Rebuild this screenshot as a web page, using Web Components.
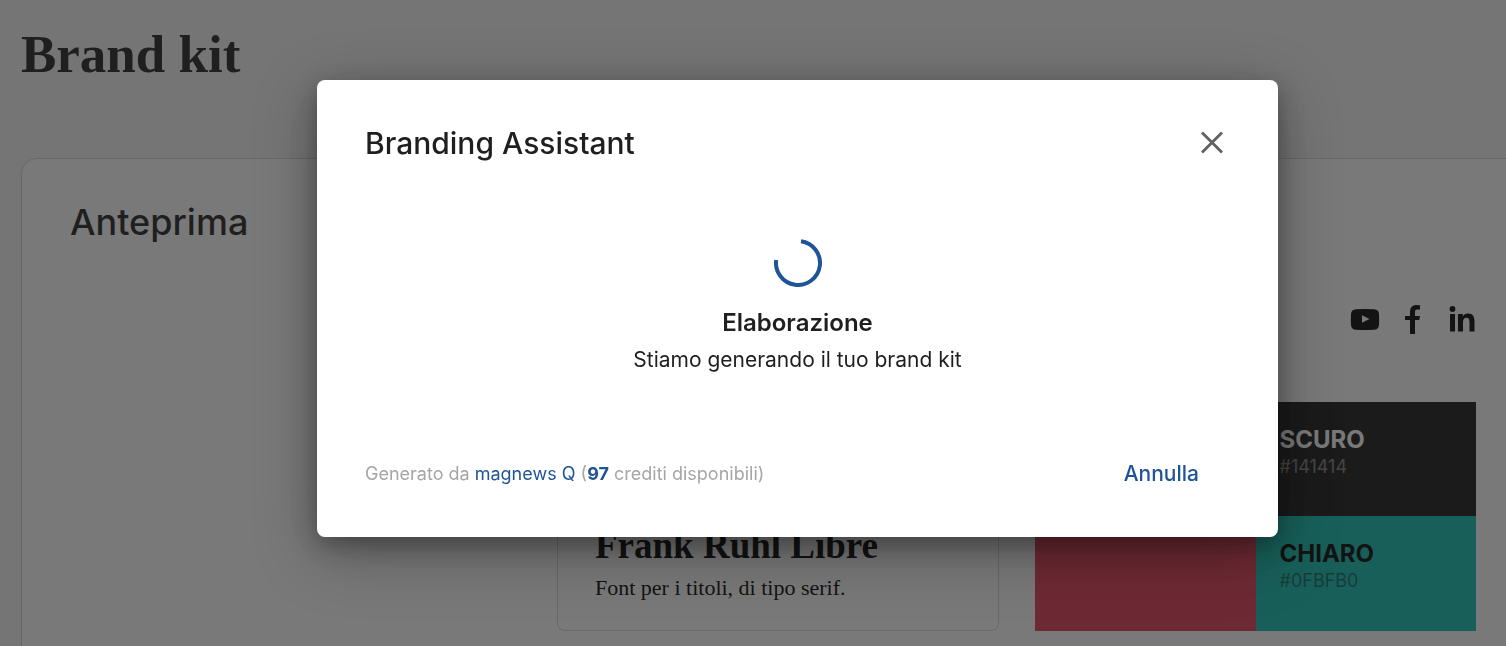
<!DOCTYPE html>
<html lang="it">
<head>
<meta charset="utf-8">
<meta name="viewport" content="width=device-width, initial-scale=1">
<title>Brand kit</title>
<style>
  html, body { margin: 0; height: 100%; overflow: hidden; }
  body {
    background: #f5f5f5;
    color: #1f1f1f;
    font-family: Inter, sans-serif;
  }
</style>
</head>
<body>
<brand-page>
  <preview-card heading="Anteprima">
    <social-links slot="social"></social-links>
    <font-card name="Frank Ruhl Libre">Font per i titoli, di tipo serif.</font-card>
    <color-palette>
      <color-swatch style="--fill:#e23a53"></color-swatch>
      <color-swatch name="SCURO" code="#141414" style="--fill:#141414;--ink:#fff"></color-swatch>
      <color-swatch style="--fill:#e23a53"></color-swatch>
      <color-swatch name="CHIARO" code="#0FBFB0" style="--fill:#0fbfb0;--ink:#000"></color-swatch>
    </color-palette>
  </preview-card>
</brand-page>
<modal-dialog heading="Branding Assistant">
  <progress-status heading="Elaborazione">Stiamo generando il tuo brand kit</progress-status>
  <credits-note slot="note" credits="97"></credits-note>
</modal-dialog>

<script>
const define = (tag, render) => customElements.define(tag, class extends HTMLElement {
  connectedCallback() {
    if (this.shadowRoot) return;
    this.attachShadow({ mode: 'open' }).innerHTML = render(this);
  }
});

define('brand-page', () => `
  <style>
    :host { display: block; padding: 26px 0 0 21px; }
    h1 { margin: 0 0 76px; font: bold 53px/56px "Liberation Serif", serif; }
  </style>
  <h1>Brand kit</h1>
  <slot></slot>`);

define('preview-card', el => `
  <style>
    :host {
      display: block; padding: 39px 30px 48px 48px; background: #fff;
      border: 1px solid #d5d5d5; border-right: 0; border-radius: 16px 0 0 16px;
    }
    h2 { margin: 0; font-size: 36px; line-height: 48px; font-weight: 500; }
    .social { display: flex; justify-content: flex-end; margin: 58px 0 66px; }
    .columns { display: grid; grid-template-columns: 451fr 442fr 441fr; gap: 36px; }
    ::slotted(font-card) { grid-column: 2; }
  </style>
  <h2>${el.getAttribute('heading')}</h2>
  <div class="social"><slot name="social"></slot></div>
  <div class="columns"><slot></slot></div>`);

define('social-links', () => `
  <style>
    :host { display: flex; gap: 16px; }
    a { display: block; width: 32px; height: 32px; color: #000; }
    svg { display: block; fill: currentColor; }
  </style>
  <a href="#youtube" aria-label="YouTube"><svg width="32" height="32" viewBox="0 0 32 32"><path fill-rule="evenodd" d="M8 5.200Q17 4.600 26 5.200Q30.600 5.500 31 10Q31.300 15.500 31 21Q30.600 25.500 26 25.800Q17 26.400 8 25.800Q3.400 25.500 3 21Q2.700 15.500 3 10Q3.400 5.500 8 5.200ZM14 11.200V18.800L21.500 15Z"/></svg></a>
  <a href="#facebook" aria-label="Facebook"><svg width="32" height="32" viewBox="0 0 32 32"><path d="M24 1.300V5.600H21.200C19.400 5.600 19 6.500 19 8V12H24L23.300 16H19V30H14V16H9V12H14V8C14 3.500 16.500 1 20.700 1Q22.700 1 24 1.300Z"/></svg></a>
  <a href="#linkedin" aria-label="LinkedIn"><svg width="32" height="32" viewBox="0 0 32 32"><circle cx="8.500" cy="5" r="2.900"/><path d="M6 10H11V27.500H6ZM14 10H18.800V12.300C19.800 10.700 21.500 9.500 24 9.500C29.200 9.500 30.500 12.800 30.500 17.700V27.500H25.500V18.700C25.500 15.900 25 13.700 22.600 13.700C20 13.700 19 15.600 19 18.300V27.500H14Z"/></svg></a>`);

define('font-card', el => `
  <style>
    :host {
      display: flex; flex-direction: column; justify-content: flex-end;
      padding: 0 37px 28px; border: 1px solid #d5d5d5; border-radius: 8px;
      font-family: "Liberation Serif", serif; color: #000;
    }
    h3 { margin: 0 0 6px; font-size: 37px; line-height: 44px; }
    p { margin: 0; font-size: 22px; line-height: 28px; }
  </style>
  <h3>${el.getAttribute('name')}</h3>
  <p><slot></slot></p>`);

define('color-palette', () => `
  <style>:host { display: grid; grid-template: 114px 115px / 1fr 1fr; }</style>
  <slot></slot>`);

define('color-swatch', el => `
  <style>
    :host {
      display: block; box-sizing: border-box; padding: 23px 24px;
      background: var(--fill); color: var(--ink);
    }
    strong, span { display: block; }
    strong { font-size: 24px; line-height: 30px; }
    span { font-size: 18px; line-height: 24px; opacity: .45; }
  </style>
  ${el.hasAttribute('name') ? `<strong>${el.getAttribute('name')}</strong><span>${el.getAttribute('code')}</span>` : ''}`);

define('modal-dialog', el => `
  <style>
    :host {
      position: fixed; inset: 0; display: flex; align-items: flex-start; justify-content: center;
      padding: 80px 0 48px 89px; background: rgba(31, 31, 31, .6);
    }
    section {
      box-sizing: border-box; width: 100%; max-width: 961px; padding: 48px;
      background: #fff; border-radius: 8px;
      box-shadow: 0 8px 24px rgba(0, 0, 0, .3), 0 16px 64px rgba(0, 0, 0, .3);
    }
    header, footer { display: flex; align-items: center; justify-content: space-between; height: 30px; }
    h2 { margin: 0; font-size: 30px; line-height: 30px; font-weight: 500; }
    button { border: 0; background: none; font: 500 21px/30px Inter, sans-serif; color: #1f5499; }
    .close { padding: 6px; color: #616161; }
    .close svg { display: block; }
    .cancel { padding: 0 31px; }
  </style>
  <section role="dialog" aria-modal="true" aria-labelledby="title">
    <header>
      <h2 id="title">${el.getAttribute('heading')}</h2>
      <button class="close" type="button" aria-label="Chiudi"><svg width="24" height="24" viewBox="0 0 24 24" fill="none" stroke="currentColor" stroke-width="2.800"><path d="M2 1.500L22 21.500M22 1.500L2 21.500"/></svg></button>
    </header>
    <slot></slot>
    <footer>
      <slot name="note"></slot>
      <button class="cancel" type="button">Annulla</button>
    </footer>
  </section>`);

define('progress-status', el => `
  <style>
    :host { display: flex; flex-direction: column; align-items: center; padding: 81px 0; text-align: center; }
    svg { display: block; margin-bottom: 18px; }
    h3, p { margin: 0; line-height: 36px; }
    h3 { margin-bottom: 1px; font-size: 24px; font-weight: 600; }
    p { font-size: 21px; }
  </style>
  <svg width="48" height="48" viewBox="0 0 48 48" fill="none" stroke="#1f5499" stroke-width="4"><path d="M27 2.200A22 22 0 1 1 2.200 21"/></svg>
  <h3>${el.getAttribute('heading')}</h3>
  <p role="status"><slot></slot></p>`);

define('credits-note', el => `
  <style>
    :host { display: block; font-size: 18px; line-height: 30px; color: #a6a6a6; }
    a, strong { color: #1f5499; text-decoration: none; }
  </style>
  Generato da <a href="#magnews-q">magnews Q</a> (<strong>${el.getAttribute('credits')}</strong> crediti disponibili)`);
</script>
</body>
</html>
